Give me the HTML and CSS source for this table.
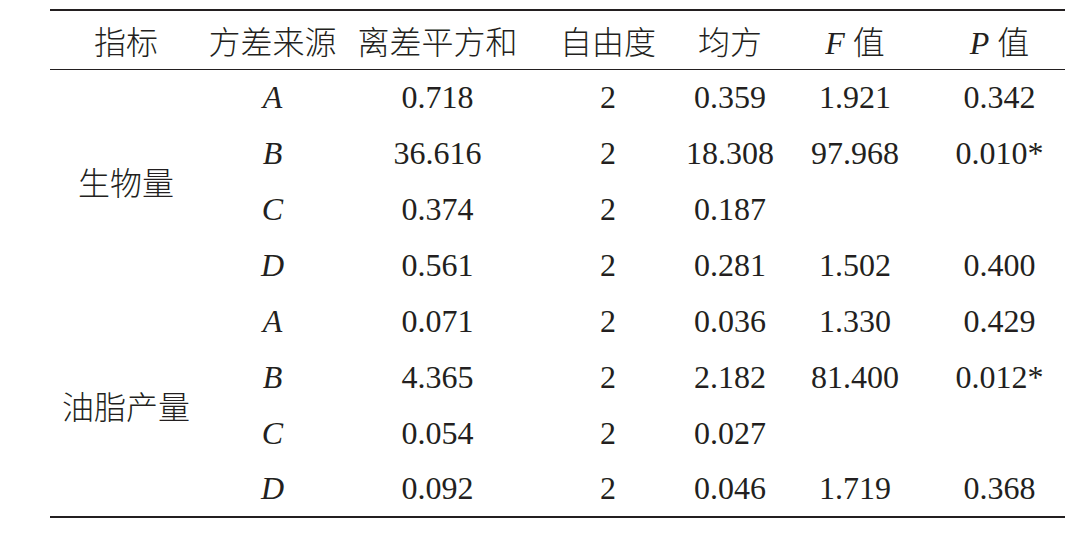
FILE: index.html
```html
<!DOCTYPE html>
<html>
    <head>
        <meta charset="utf-8">
        <link rel="stylesheet" href="styles.css">
    </head>
    <body>
        <table class="anova">
            <colgroup>
                <col class="c-ind">
                <col class="c-src">
                <col class="c-ss">
                <col class="c-df">
                <col class="c-ms">
                <col class="c-f">
                <col class="c-p">
            </colgroup>
            <thead>
                <tr>
                    <th><span class="zh">指标</span></th>
                    <th><span class="zh">方差来源</span></th>
                    <th><span class="zh">离差平方和</span></th>
                    <th><span class="zh">自由度</span></th>
                    <th><span class="zh">均方</span></th>
                    <th><i>F</i> <span class="zh">值</span></th>
                    <th><i>P</i> <span class="zh">值</span></th>
                </tr>
            </thead>
            <tbody>
                <tr>
                    <td rowspan="4"><span class="zh">生物量</span></td>
                    <td><i>A</i></td><td>0.718</td><td>2</td><td>0.359</td><td>1.921</td><td>0.342</td>
                </tr>
                <tr>
                    <td><i>B</i></td><td>36.616</td><td>2</td><td>18.308</td><td>97.968</td><td>0.010*</td>
                </tr>
                <tr>
                    <td><i>C</i></td><td>0.374</td><td>2</td><td>0.187</td><td></td><td></td>
                </tr>
                <tr>
                    <td><i>D</i></td><td>0.561</td><td>2</td><td>0.281</td><td>1.502</td><td>0.400</td>
                </tr>
                <tr>
                    <td rowspan="4"><span class="zh">油脂产量</span></td>
                    <td><i>A</i></td><td>0.071</td><td>2</td><td>0.036</td><td>1.330</td><td>0.429</td>
                </tr>
                <tr>
                    <td><i>B</i></td><td>4.365</td><td>2</td><td>2.182</td><td>81.400</td><td>0.012*</td>
                </tr>
                <tr>
                    <td><i>C</i></td><td>0.054</td><td>2</td><td>0.027</td><td></td><td></td>
                </tr>
                <tr>
                    <td><i>D</i></td><td>0.092</td><td>2</td><td>0.046</td><td>1.719</td><td>0.368</td>
                </tr>
            </tbody>
        </table>
    </body>
</html>
```

FILE: styles.css
```css
html {
    box-sizing: border-box;
}
*, *:before, *:after {
    box-sizing: inherit;
}

body {
    margin: 0;
    background-color: white;
    color: #231f20;
    font-family: "Liberation Serif", "Times New Roman", serif;
}

.anova {
    border-collapse: collapse;
    table-layout: fixed;
    width: 1015px;
    margin: 9px 0 0 50px;
    font-size: 32px;
    border-top: 2px solid #231f20;
    border-bottom: 2px solid #231f20;
}

.c-ind { width: 152px; }
.c-src { width: 141px; }
.c-ss  { width: 189px; }
.c-df  { width: 152px; }
.c-ms  { width: 92px; }
.c-f   { width: 158px; }
.c-p   { width: 131px; }

.anova th, .anova td {
    padding: 0;
    text-align: center;
    white-space: nowrap;
    font-weight: normal;
}

.anova thead th {
    height: 59px;
    border-bottom: 1px solid #231f20;
}

.anova tbody td {
    height: 56px;
}

.zh {
    font-family: "Noto Sans CJK SC", sans-serif;
    font-weight: 300;
}
```
